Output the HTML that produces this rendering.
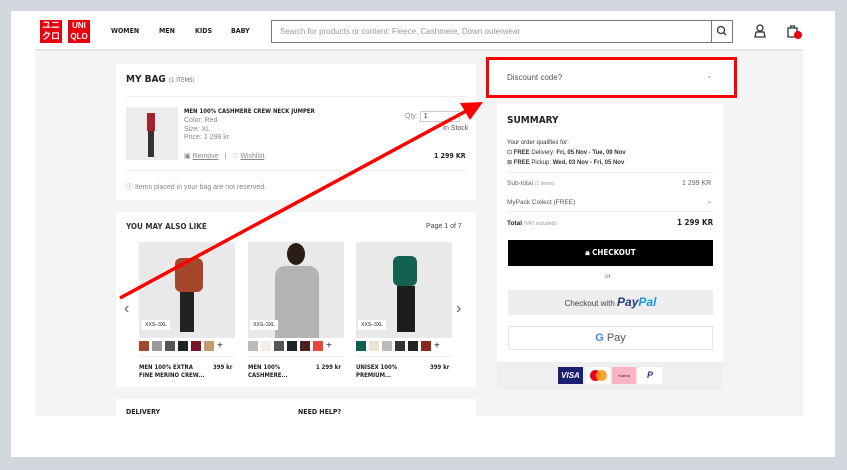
<!DOCTYPE html>
<html><head><meta charset="utf-8"><style>
*{box-sizing:border-box;margin:0;padding:0}
body{width:847px;height:470px;background:#d3d6dd;font-family:"Liberation Sans",sans-serif;position:relative;overflow:hidden;color:#222}
.a{position:absolute}
.panel{left:11px;top:11px;width:824px;height:446px;background:#fff}
.gray{left:35px;top:50px;width:768px;height:366px;background:#f4f4f4}
.card{background:#fff}
.h{font-weight:bold;font-family:"DejaVu Sans Condensed","Liberation Sans",sans-serif;letter-spacing:0}
.s{font-size:7px;color:#888}
.sw{display:inline-block;width:10px;height:10px;margin-right:3px;vertical-align:middle}
</style></head><body>
<div class="a panel"></div>
<div class="a gray"></div>
<div class="a" style="left:35px;top:49px;width:768px;height:2px;background:#e6e6e6"></div>
<!-- header -->
<div class="a" style="left:40px;top:20px;width:22px;height:23px;background:#e8000f;color:#fff;font-size:9px;line-height:11px;text-align:center;font-weight:bold">ユニ<br>クロ</div>
<div class="a" style="left:68px;top:20px;width:22px;height:23px;background:#e8000f;color:#fff;font-size:8px;line-height:11px;text-align:center;font-weight:bold">UNI<br>QLO</div>
<div class="a h" style="left:111px;top:27px;font-size:7px">WOMEN</div>
<div class="a h" style="left:159px;top:27px;font-size:7px">MEN</div>
<div class="a h" style="left:195px;top:27px;font-size:7px">KIDS</div>
<div class="a h" style="left:231px;top:27px;font-size:7px">BABY</div>
<div class="a" style="left:271px;top:20px;width:462px;height:23px;border:1px solid #777;font-size:8px;color:#999;padding:6px 8px">Search for products or content: Fleece, Cashmere, Down outerwear</div>
<div class="a" style="left:711px;top:20px;width:22px;height:23px;border-left:1px solid #777"></div>
<svg class="a" style="left:716px;top:25px" width="12" height="12"><circle cx="5" cy="5" r="3.5" fill="none" stroke="#333" stroke-width="1.3"/><line x1="7.5" y1="7.5" x2="10" y2="10" stroke="#333" stroke-width="1.3"/></svg>
<svg class="a" style="left:754px;top:24px" width="12" height="14"><circle cx="6" cy="4" r="3" fill="none" stroke="#333" stroke-width="1.3"/><path d="M1 13 L2 8 H10 L11 13 Z" fill="none" stroke="#333" stroke-width="1.3"/></svg>
<svg class="a" style="left:787px;top:24px" width="16" height="16"><path d="M1 4 H10 V13 H1 Z" fill="none" stroke="#333" stroke-width="1.3"/><path d="M3.5 4 V2 H7.5 V4" fill="none" stroke="#333" stroke-width="1.2"/><circle cx="11" cy="11" r="4" fill="#e8000f"/></svg>
<!-- bag card -->
<div class="a card" style="left:116px;top:64px;width:360px;height:136px"></div>
<div class="a h" style="left:126px;top:74px;font-size:10px">MY BAG <span style="font-size:6px;color:#666;font-weight:normal">(1 ITEMS)</span></div>
<div class="a" style="left:126px;top:96px;width:340px;height:1px;background:#eee"></div>
<div class="a" style="left:126px;top:107px;width:52px;height:53px;background:#ececec"></div>
<div class="a" style="left:147px;top:113px;width:8px;height:18px;background:#a52232"></div>
<div class="a" style="left:148px;top:131px;width:6px;height:26px;background:#333"></div>
<div class="a h" style="left:184px;top:108px;font-size:6px">MEN 100% CASHMERE CREW NECK JUMPER</div>
<div class="a s" style="left:184px;top:117px;line-height:8.5px">Color: Red<br>Size: XL<br>Price: 1 299 kr</div>
<div class="a s" style="left:184px;top:152px">▣ <u>Remove</u> &nbsp; | &nbsp; ♡ <u>Wishlist</u></div>
<div class="a s" style="left:405px;top:111px">Qty: <span style="display:inline-block;width:40px;border:1px solid #ccc;color:#333;padding:1px 3px">1</span></div>
<div class="a s" style="left:443px;top:125px;color:#555">In Stock</div>
<div class="a h" style="left:434px;top:152px;font-size:7px">1 299 KR</div>
<div class="a" style="left:126px;top:170px;width:340px;height:1px;background:#eee"></div>
<div class="a s" style="left:126px;top:182px">ⓘ Items placed in your bag are not reserved.</div>
<!-- recs -->
<div class="a card" style="left:116px;top:212px;width:360px;height:175px"></div>
<div class="a h" style="left:126px;top:222px;font-size:8px;color:#333">YOU MAY ALSO LIKE</div>
<div class="a" style="left:426px;top:223px;font-size:7px;color:#444">Page 1 of 7</div>
<div class="a" style="left:139px;top:242px;width:96px;height:96px;background:#e9e9e9"></div>
<div class="a" style="left:175px;top:258px;width:28px;height:34px;background:#a4472a;border-radius:6px"></div>
<div class="a" style="left:180px;top:292px;width:14px;height:40px;background:#222"></div>
<div class="a" style="left:248px;top:242px;width:96px;height:96px;background:#e9e9e9"></div>
<div class="a" style="left:275px;top:266px;width:44px;height:72px;background:#b3b3b3;border-radius:10px 10px 0 0"></div>
<div class="a" style="left:287px;top:243px;width:18px;height:22px;background:#2a1d16;border-radius:50%"></div>
<div class="a" style="left:356px;top:242px;width:96px;height:96px;background:#e9e9e9"></div>
<div class="a" style="left:393px;top:256px;width:24px;height:30px;background:#146152;border-radius:6px"></div>
<div class="a" style="left:397px;top:286px;width:18px;height:46px;background:#1d1d1d"></div>
<div class="a" style="left:142px;top:320px;width:28px;height:10px;background:#fff;font-size:5px;text-align:center;line-height:10px">XXS–3XL</div>
<div class="a" style="left:250px;top:320px;width:28px;height:10px;background:#fff;font-size:5px;text-align:center;line-height:10px">XXS–3XL</div>
<div class="a" style="left:358px;top:320px;width:28px;height:10px;background:#fff;font-size:5px;text-align:center;line-height:10px">XXS–3XL</div>
<div class="a" style="left:124px;top:300px;font-size:16px;color:#666">‹</div>
<div class="a" style="left:456px;top:300px;font-size:16px;color:#666">›</div>
<div class="a" style="left:139px;top:341px;font-size:10px;line-height:10px"><span class="sw" style="background:#a4472a"></span><span class="sw" style="background:#999"></span><span class="sw" style="background:#555"></span><span class="sw" style="background:#222"></span><span class="sw" style="background:#7a1428"></span><span class="sw" style="background:#c39a70"></span>+</div>
<div class="a" style="left:248px;top:341px;font-size:10px;line-height:10px"><span class="sw" style="background:#bbb"></span><span class="sw" style="background:#f5eee8"></span><span class="sw" style="background:#555"></span><span class="sw" style="background:#222"></span><span class="sw" style="background:#4a2020"></span><span class="sw" style="background:#e5473a"></span>+</div>
<div class="a" style="left:356px;top:341px;font-size:10px;line-height:10px"><span class="sw" style="background:#0e5e52"></span><span class="sw" style="background:#eee2d6"></span><span class="sw" style="background:#bbb"></span><span class="sw" style="background:#333"></span><span class="sw" style="background:#222"></span><span class="sw" style="background:#8a2a1c"></span>+</div>
<div class="a" style="left:139px;top:356px;width:96px;height:1px;background:#eee"></div>
<div class="a" style="left:248px;top:356px;width:96px;height:1px;background:#eee"></div>
<div class="a" style="left:356px;top:356px;width:96px;height:1px;background:#eee"></div>
<div class="a h" style="left:139px;top:364px;font-size:6px;line-height:8px">MEN 100% EXTRA<br>FINE MERINO CREW...</div>
<div class="a h" style="left:213px;top:364px;font-size:6px">399 kr</div>
<div class="a h" style="left:248px;top:364px;font-size:6px;line-height:8px">MEN 100%<br>CASHMERE...</div>
<div class="a h" style="left:316px;top:364px;font-size:6px">1 299 kr</div>
<div class="a h" style="left:356px;top:364px;font-size:6px;line-height:8px">UNISEX 100%<br>PREMIUM...</div>
<div class="a h" style="left:430px;top:364px;font-size:6px">399 kr</div>
<!-- delivery -->
<div class="a card" style="left:116px;top:399px;width:360px;height:17px"></div>
<div class="a h" style="left:126px;top:408px;font-size:7px">DELIVERY</div>
<div class="a h" style="left:298px;top:408px;font-size:7px">NEED HELP?</div>
<!-- right -->
<div class="a" style="left:486px;top:57px;width:251px;height:41px;border:3px solid #f00;background:#fff"></div>
<div class="a" style="left:507px;top:73px;font-size:8px;color:#555">Discount code?</div>
<div class="a" style="left:706px;top:71px;font-size:8px;color:#999">⌄</div>
<div class="a card" style="left:497px;top:104px;width:226px;height:258px"></div>
<div class="a h" style="left:507px;top:115px;font-size:10px">SUMMARY</div>
<div class="a" style="left:507px;top:138px;font-size:6px;color:#333;line-height:10px">Your order qualifies for:<br>⊡ <b>FREE</b> Delivery: <b>Fri, 05 Nov - Tue, 09 Nov</b><br>⊠ <b>FREE</b> Pickup: <b>Wed, 03 Nov - Fri, 05 Nov</b></div>
<div class="a" style="left:507px;top:172px;width:206px;height:1px;background:#eee"></div>
<div class="a" style="left:507px;top:180px;font-size:6.5px;color:#666">Sub-total <span style="font-size:5px;color:#999">(1 items):</span></div>
<div class="a" style="left:682px;top:180px;font-size:7px;color:#666">1 299 KR</div>
<div class="a" style="left:507px;top:199px;font-size:6.5px;color:#555">MyPack Collect (FREE)</div>
<div class="a" style="left:706px;top:196px;font-size:8px;color:#999">⌄</div>
<div class="a" style="left:507px;top:211px;width:206px;height:1px;background:#eee"></div>
<div class="a" style="left:507px;top:220px;font-size:6.5px;font-weight:bold">Total <span style="font-size:5px;color:#999;font-weight:normal">(VAT included):</span></div>
<div class="a h" style="left:677px;top:218px;font-size:8px">1 299 KR</div>
<div class="a h" style="left:508px;top:240px;width:205px;height:26px;background:#000;color:#fff;font-size:8px;text-align:center;line-height:26px">🔒︎ CHECKOUT</div>
<div class="a" style="left:605px;top:273px;font-size:6.5px;color:#777">or</div>
<div class="a" style="left:508px;top:290px;width:205px;height:25px;background:#eee;text-align:center;line-height:25px;font-size:8px;color:#444">Checkout with <b style="font-size:12px;font-style:italic;color:#253b80">Pay</b><b style="font-size:12px;font-style:italic;color:#179bd7">Pal</b></div>
<div class="a" style="left:508px;top:326px;width:205px;height:24px;border:1px solid #e5e5e5;text-align:center;line-height:22px;font-size:11px;color:#555"><b style="color:#4285f4">G</b> Pay</div>
<div class="a" style="left:497px;top:362px;width:226px;height:28px;background:#efefef"></div>
<div class="a" style="left:558px;top:367px;width:25px;height:17px;background:#1a1f71;color:#fff;font-size:8px;font-weight:bold;font-style:italic;text-align:center;line-height:17px">VISA</div>
<div class="a" style="left:586px;top:367px;width:24px;height:17px;background:#fff"></div>
<div class="a" style="left:590px;top:370px;width:11px;height:11px;border-radius:50%;background:#eb001b"></div>
<div class="a" style="left:596px;top:370px;width:11px;height:11px;border-radius:50%;background:#f79e1b;opacity:.9"></div>
<div class="a" style="left:612px;top:367px;width:24px;height:17px;background:#ffb3c7;font-size:4px;text-align:center;line-height:17px">Klarna</div>
<div class="a" style="left:638px;top:367px;width:24px;height:17px;background:#fff;color:#253b80;font-weight:bold;font-style:italic;font-size:9px;text-align:center;line-height:17px">P</div>
<!-- arrow -->
<svg class="a" style="left:0;top:0" width="847" height="470"><line x1="120" y1="298" x2="468" y2="110" stroke="#f00" stroke-width="3.5"/><path d="M483 102 L460 103 L470 120 Z" fill="#f00"/></svg>
</body></html>
